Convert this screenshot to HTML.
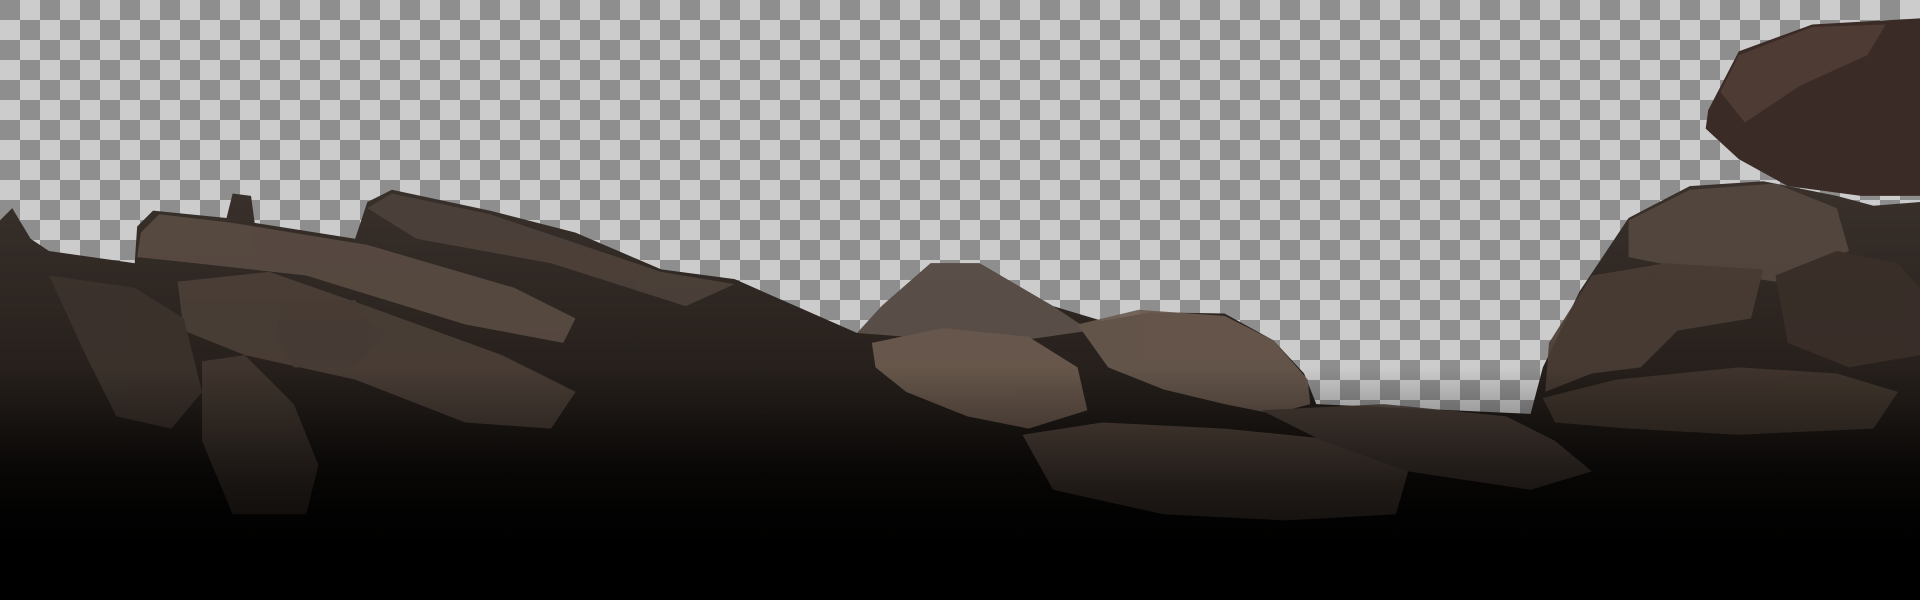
<!DOCTYPE html>
<html><head><meta charset="utf-8"><style>
html,body{margin:0;padding:0;width:1920px;height:600px;overflow:hidden;}
body{background-color:#cccccc;background-image:linear-gradient(45deg,#8e8e8e 25%,transparent 25%,transparent 75%,#8e8e8e 75%),linear-gradient(45deg,#8e8e8e 25%,transparent 25%,transparent 75%,#8e8e8e 75%);background-size:40px 40px;background-position:20px 0,0 20px;}
svg{position:absolute;left:0;top:0;}
</style></head><body>
<svg width="1920" height="600" viewBox="0 0 1568 490" preserveAspectRatio="none">
<defs>
<linearGradient id="g" x1="0" y1="0" x2="0" y2="1">
<stop offset="0" stop-color="#3a312c"/><stop offset="0.55" stop-color="#221c18"/><stop offset="0.78" stop-color="#0a0807"/><stop offset="1" stop-color="#000"/>
</linearGradient>
<linearGradient id="f" x1="0" y1="0" x2="0" y2="1">
<stop offset="0" stop-color="#000" stop-opacity="0"/><stop offset="0.5" stop-color="#000" stop-opacity="0.6"/><stop offset="1" stop-color="#000"/>
</linearGradient>
</defs>
<path fill="url(#g)" d="M0,180 L10,170 L25,195 L40,205 L110,215 L112,185 L125,172 L185,178 L190,158 L205,160 L208,182 L290,195 L300,165 L320,155 L400,172 L470,190 L540,220 L600,228 L650,250 L700,272 L720,250 L760,215 L800,215 L860,250 L900,262 L940,255 L1000,256 L1040,278 L1065,305 L1075,330 L1250,338 L1260,300 L1290,238 L1330,178 L1380,152 L1440,148 L1500,160 L1530,168 L1568,165 L1568,490 L0,490 Z"/>
<path fill="#3b2b26" d="M1395,90 L1420,42 L1480,20 L1568,15 L1568,160 L1520,160 L1460,152 L1420,130 L1393,105 Z"/>
<path fill="#4e3b34" d="M1405,75 L1420,45 L1480,22 L1540,20 L1525,45 L1470,70 L1425,100 Z"/>
<g opacity="0.9">
<path fill="#5a4c43" d="M115,190 L130,175 L190,182 L300,200 L420,235 L470,260 L460,280 L380,265 L250,225 L160,215 L112,210 Z"/>
<path fill="#4e423b" d="M300,170 L320,158 L400,175 L540,222 L600,232 L560,250 L450,215 L340,195 Z"/>
<path fill="#5e534c" d="M700,272 L720,250 L760,215 L800,215 L860,250 L890,270 L820,280 L740,275 Z"/>
<path fill="#6e5c50" d="M712,280 L770,268 L840,275 L880,300 L888,335 L840,350 L790,340 L740,320 L715,300 Z"/>
<path fill="#6a5a4f" d="M880,265 L930,253 L1000,258 L1040,278 L1068,310 L1070,330 L1040,338 L1000,330 L950,318 L905,300 Z"/>
<path fill="#4c4038" d="M145,230 L220,222 L300,250 L410,290 L470,320 L450,350 L380,345 L290,310 L200,290 L150,270 Z"/>
<path fill="#4a3e37" d="M230,250 L290,245 L310,275 L290,300 L240,300 L225,275 Z"/>
<path fill="#423730" d="M165,295 L200,290 L240,330 L260,380 L250,420 L190,420 L165,360 Z"/>
<path fill="#3d332d" d="M40,225 L110,235 L150,260 L165,320 L140,350 L95,340 L70,290 Z"/>
<path fill="#5a4a41" d="M835,355 L900,345 L1000,350 L1100,360 L1150,385 L1140,420 L1050,425 L950,420 L860,400 Z"/>
<path fill="#4d4039" d="M1030,335 L1130,330 L1230,340 L1270,360 L1300,385 L1250,400 L1150,385 L1080,360 Z"/>
<path fill="#554840" d="M1330,180 L1380,155 L1450,150 L1500,170 L1510,205 L1450,230 L1380,220 L1330,210 Z"/>
<path fill="#4a3d35" d="M1265,280 L1300,225 L1360,215 L1440,220 L1430,260 L1370,270 L1340,300 L1300,305 L1262,320 Z"/>
<path fill="#43372f" d="M1260,325 L1320,310 L1420,300 L1500,305 L1550,320 L1530,350 L1420,355 L1330,350 L1270,345 Z"/>
<path fill="#3a2f29" d="M1450,225 L1500,205 L1550,215 L1568,235 L1568,290 L1510,300 L1460,280 Z"/>
</g>
<rect x="0" y="300" width="1568" height="190" fill="url(#f)"/>
<rect x="0" y="440" width="1568" height="50" fill="#000"/>
</svg>
</body></html>
